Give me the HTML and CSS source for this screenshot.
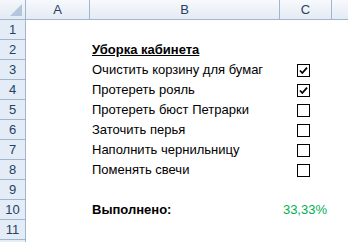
FILE: index.html
```html
<!DOCTYPE html>
<html lang="ru">
<head>
<meta charset="utf-8">
<link rel="stylesheet" href="styles.css">
</head>
<body>
<div class="sheet">
  <div class="corner"><span class="tri"></span></div>
  <div class="colh">A</div>
  <div class="colh">B</div>
  <div class="colh">C</div>
  <div class="colh last"></div>

  <div class="rowh">1</div><div class="cell"></div><div class="cell"></div><div class="cell"></div><div class="cell"></div>
  <div class="rowh">2</div><div class="cell"></div><div class="cell title">Уборка кабинета</div><div class="cell"></div><div class="cell"></div>
  <div class="rowh">3</div><div class="cell"></div><div class="cell">Очистить корзину для бумаг</div><div class="cell box"><span class="chk on"><svg viewBox="0 0 11 11" width="11" height="11"><path d="M2 5.5 L4.3 8 L9 2.6" fill="none" stroke="#000" stroke-width="1.8"/></svg></span></div><div class="cell"></div>
  <div class="rowh">4</div><div class="cell"></div><div class="cell">Протереть рояль</div><div class="cell box"><span class="chk on"><svg viewBox="0 0 11 11" width="11" height="11"><path d="M2 5.5 L4.3 8 L9 2.6" fill="none" stroke="#000" stroke-width="1.8"/></svg></span></div><div class="cell"></div>
  <div class="rowh">5</div><div class="cell"></div><div class="cell">Протереть бюст Петрарки</div><div class="cell box"><span class="chk"></span></div><div class="cell"></div>
  <div class="rowh">6</div><div class="cell"></div><div class="cell">Заточить перья</div><div class="cell box"><span class="chk"></span></div><div class="cell"></div>
  <div class="rowh">7</div><div class="cell"></div><div class="cell">Наполнить чернильницу</div><div class="cell box"><span class="chk"></span></div><div class="cell"></div>
  <div class="rowh">8</div><div class="cell"></div><div class="cell">Поменять свечи</div><div class="cell box"><span class="chk"></span></div><div class="cell"></div>
  <div class="rowh">9</div><div class="cell"></div><div class="cell"></div><div class="cell"></div><div class="cell"></div>
  <div class="rowh">10</div><div class="cell"></div><div class="cell bold">Выполнено:</div><div class="cell pct">33,33%</div><div class="cell"></div>
  <div class="rowh">11</div><div class="cell"></div><div class="cell"></div><div class="cell"></div><div class="cell"></div>
  <div class="rowh"></div><div class="cell"></div><div class="cell"></div><div class="cell"></div><div class="cell"></div>
</div>
</body>
</html>
```
FILE: styles.css
```css
html, body {
  margin: 0;
  padding: 0;
  background: #fff;
  overflow: hidden;
}
.sheet {
  display: grid;
  grid-template-columns: 26px 64px 190px 52px 16px;
  grid-auto-rows: 20px;
  height: 242px;
  overflow: hidden;
  font-family: "Liberation Sans", Arial, sans-serif;
  font-size: 13px;
  color: #000;
}
.corner {
  position: relative;
  background: linear-gradient(#f4f7fb, #e3eaf3);
  border-right: 1px solid #9eb6ce;
  border-bottom: 1px solid #9eb6ce;
}
.tri {
  position: absolute;
  right: 3px;
  bottom: 3px;
  width: 0;
  height: 0;
  border-left: 12px solid transparent;
  border-bottom: 12px solid #b4c6dc;
}
.colh {
  display: flex;
  align-items: center;
  justify-content: center;
  background: linear-gradient(#f7f9fc, #e4ebf4);
  border-right: 1px solid #9eb6ce;
  border-bottom: 1px solid #9eb6ce;
  color: #27415f;
  font-size: 13px;
}
.colh.last {
  border-right: none;
}
.rowh {
  display: flex;
  align-items: center;
  justify-content: center;
  background: #e4ecf7;
  border-right: 1px solid #9eb6ce;
  border-bottom: 1px solid #9eb6ce;
  color: #27415f;
  font-size: 13px;
}
.cell {
  display: flex;
  align-items: flex-end;
  padding: 0 2px 3px 2px;
  white-space: nowrap;
  overflow: visible;
}
.title {
  font-weight: bold;
  text-decoration: underline;
}
.bold {
  font-weight: bold;
}
.pct {
  justify-content: flex-end;
  color: #00b050;
  padding-right: 5px;
}
.box {
  align-items: center;
  padding: 0 0 0 17px;
}
.chk {
  display: block;
  width: 11px;
  height: 11px;
  border: 1px solid #000;
  background: #fff;
}
.chk svg {
  display: block;
}
```
